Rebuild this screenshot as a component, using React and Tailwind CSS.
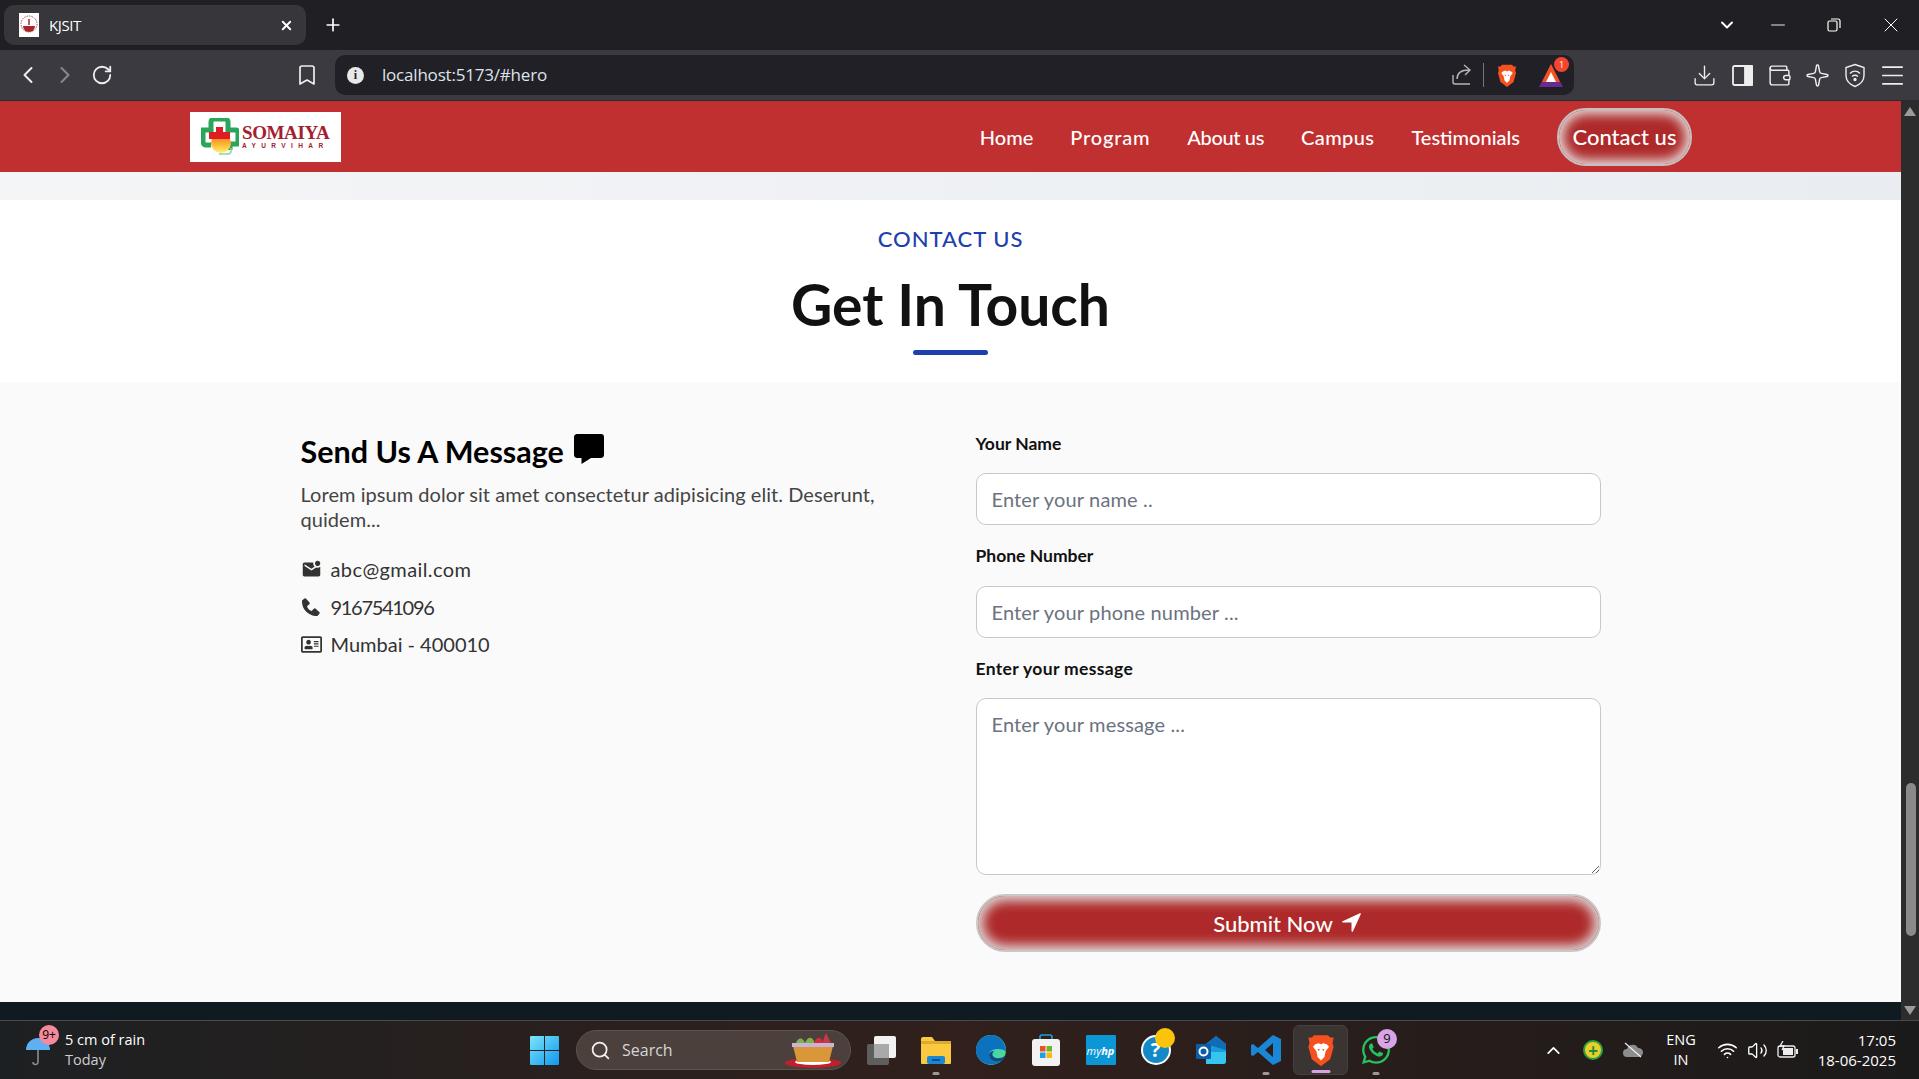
import React from "react";
import { ChevronLeft, ChevronRight, RotateCw, Bookmark, Plus, X, ChevronDown, Minus, Download, Wallet, Menu, Search, ChevronUp, Wifi, Volume2, Sparkle } from "lucide-react";
import { BiSolidMessage, BiSolidPhone } from "react-icons/bi";
import { MdMarkEmailUnread } from "react-icons/md";
import { FaRegAddressCard } from "react-icons/fa";
import { IoNavigate } from "react-icons/io5";
import { FaWhatsapp } from "react-icons/fa";

const font = "font-['Lato','Liberation_Sans',sans-serif]";

function BraveLion({ size = 24 }) {
  return (
    <svg width={size} height={size * 1.15} viewBox="0 0 24 28">
      <path d="M6 1h12l2 2 3 0-1 5 1 3-3 11-8 6-8-6L1 11l1-3-1-5 3 0z" fill="#f4511e" />
      <path d="M7 9l3-1 2 1 2-1 3 1 2 2-3 4-1 5-3 3-3-3-1-5-3-4z" fill="#fff" />
      <path d="M9 13h2l-1 2zM13 13h2l-1 2z" fill="#f4511e" />
    </svg>
  );
}

function Logo() {
  return (
    <div className="w-[151px] h-[50px] bg-white flex items-center pl-[11px] shrink-0">
      <svg width="38" height="38" viewBox="0 0 38 38" className="shrink-0">
        <path d="M10 14V4a3 3 0 0 1 3-3h11a3 3 0 0 1 3 3v8h8a2 2 0 0 1 2 2v12h-8v6" fill="none" stroke="#2aa55a" strokeWidth="5" />
        <path d="M9 12H2v12a3 3 0 0 0 3 3h5" fill="none" stroke="#2aa55a" strokeWidth="5" />
        <path d="M30 30v3a3 3 0 0 1-3 3H18" fill="none" stroke="#8fd3a3" strokeWidth="1.5" />
        <circle cx="20" cy="25" r="10" fill="url(#sun)" />
        <path d="M15 9h7v5h7v7H8v-7h7z" fill="#e01c24" />
        <defs>
          <linearGradient id="sun" x1="0" y1="0" x2="0" y2="1">
            <stop offset="0" stopColor="#f26a21" />
            <stop offset="0.55" stopColor="#fdb52f" />
            <stop offset="1" stopColor="#fff176" />
          </linearGradient>
        </defs>
      </svg>
      <div className="ml-[3px] flex flex-col items-stretch font-['Liberation_Serif',serif] text-[#a3202f] leading-none">
        <span className="text-[19px] font-bold leading-[18px] tracking-[-0.4px] whitespace-nowrap">SOMAIYA</span>
        <span className="text-[6.5px] font-bold leading-[7px] tracking-[5.4px] whitespace-nowrap font-['Liberation_Sans',sans-serif]">AYURVIHAR</span>
      </div>
    </div>
  );
}

function TabStrip() {
  return (
    <div className="h-[50px] bg-[#1f1f24] flex items-center text-white font-['Open_Sans',sans-serif]">
      <div className="ml-[4px] w-[302px] h-[40px] rounded-[10px] bg-[#36363b] flex items-center pl-[15px] pr-[12px]">
        <div className="w-[20px] h-[24px] bg-white flex items-center justify-center shrink-0">
          <svg width="18" height="20" viewBox="0 0 18 20">
            <circle cx="9" cy="9" r="8" fill="none" stroke="#b8474a" strokeWidth="1" strokeDasharray="1.5 1" />
            <path d="M3 11h12a6 6 0 0 1-12 0z" fill="#a8262b" />
            <path d="M9 4v6" stroke="#a8262b" strokeWidth="1.5" />
          </svg>
        </div>
        <span className="ml-[10px] text-[15px] tracking-[-0.4px]">KJSIT</span>
        <X size={15} strokeWidth={3} className="ml-auto" />
      </div>
      <Plus size={20} strokeWidth={2} className="ml-[17px]" />
      <div className="ml-auto flex items-center">
        <ChevronDown size={20} strokeWidth={2.4} />
        <Minus size={22} strokeWidth={1} className="ml-[30px]" />
        <svg width="14" height="14" viewBox="0 0 14 14" fill="none" stroke="#fff" strokeWidth="1.2" className="ml-[38px]">
          <rect x="1" y="3" width="9" height="10" rx="1.5" />
          <path d="M4 1h7a2 2 0 0 1 2 2v7" />
        </svg>
        <X size={24} strokeWidth={1} className="ml-[38px] mr-[16px]" />
      </div>
    </div>
  );
}

function ToolSlot({ children }) {
  return <div className="w-[37.5px] flex items-center justify-center">{children}</div>;
}

function ToolBar() {
  return (
    <div className="h-[51px] bg-[#3a3a40] flex items-center text-[#eeeeee] border-b border-[#2b2b2f]">
      <ChevronLeft size={28} strokeWidth={1.7} className="ml-[14px]" />
      <ChevronRight size={28} strokeWidth={1.7} className="ml-[9px] text-[#8a8a8e]" />
      <RotateCw size={22} strokeWidth={2} className="ml-[12px]" />
      <Bookmark size={24} strokeWidth={1.7} className="ml-[182px]" />
      <div className="ml-[16px] w-[1239px] h-[40px] rounded-[10px] bg-[#202026] flex items-center">
        <div className="ml-[12px] w-[17px] h-[17px] rounded-full bg-[#e8e8e8] flex items-center justify-center text-[#202026] text-[12px] font-bold font-['Liberation_Serif',serif] leading-none">i</div>
        <span className="ml-[18px] text-[17px] tracking-[-0.2px] text-[#dfe3e8] font-['Open_Sans',sans-serif]">localhost:5173/#hero</span>
        <div className="ml-auto w-[24px] flex justify-center">
          <svg width="20" height="22" viewBox="0 0 20 22" fill="none" stroke="#b5b5b8" strokeWidth="1.4">
            <path d="M1 11v7a2 2 0 0 0 2 2h15" />
            <path d="M5 15c0-6 4-9 12-9M12 1l6 5-5 5" />
          </svg>
        </div>
        <div className="ml-[9px] w-[1px] h-[24px] bg-[#77777b]" />
        <div className="ml-[11px] w-[24px] flex justify-center"><BraveLion size={20} /></div>
        <div className="relative ml-[20px] mr-[11px] w-[24px] h-[24px]">
          <svg width="24" height="24" viewBox="0 0 24 24">
            <path d="M12 1L24 24H0z" fill="#662d91" />
            <path d="M12 1L21 19H3z" fill="#f4511e" />
            <path d="M12 9l5 10H7z" fill="#fff" />
          </svg>
          <div className="absolute -top-[6px] -right-[6px] w-[15px] h-[15px] rounded-full bg-[#f4452e] text-white text-[9px] flex items-center justify-center font-['Open_Sans',sans-serif]">1</div>
        </div>
      </div>
      <div className="ml-[112px] flex items-center">
        <ToolSlot><Download size={25} strokeWidth={1.3} /></ToolSlot>
        <ToolSlot>
          <svg width="21" height="21" viewBox="0 0 21 21" fill="none" stroke="#eee" strokeWidth="1.8">
            <rect x="1" y="1" width="19" height="19" rx="1.5" />
            <rect x="13" y="1" width="7" height="19" fill="#eee" />
          </svg>
        </ToolSlot>
        <ToolSlot><Wallet size={25} strokeWidth={1.4} /></ToolSlot>
        <ToolSlot><Sparkle size={25} strokeWidth={1.4} /></ToolSlot>
        <ToolSlot>
          <svg width="20" height="25" viewBox="0 0 20 24" fill="none" stroke="#eee" strokeWidth="1.4">
            <path d="M10 1l9 3v8c0 5-4 9-9 11C5 21 1 17 1 12V4z" />
            <path d="M5 10c3-3 7-3 10 0M7 13c2-1.600 4-1.600 6 0" />
            <circle cx="10" cy="16" r="1" fill="#eee" />
          </svg>
        </ToolSlot>
        <ToolSlot><Menu size={29} strokeWidth={1.4} /></ToolSlot>
      </div>
    </div>
  );
}

function NavBar() {
  const links = [
    ["Home", "tracking-[0px]"],
    ["Program", "tracking-[0.8px]"],
    ["About us", "tracking-[-0.35px]"],
    ["Campus", "tracking-[0.4px]"],
    ["Testimonials", "tracking-[0px]"],
  ];
  return (
    <div className={`h-[71px] bg-[#c13030] flex items-center justify-between pl-[190px] pr-[209px] text-white ${font}`}>
      <Logo />
      <div className="flex items-center gap-[37px]">
        {links.map(([l, t]) => (
          <span key={l} className={`text-[20px] font-medium leading-[30px] whitespace-nowrap ${t}`}>{l}</span>
        ))}
        <div className="w-[135px] h-[58px] rounded-full border-2 border-[#c4c0c0] bg-[#ae2929] shadow-[inset_0_0_12px_4px_rgba(235,235,235,0.95)] flex items-center justify-center text-[22px] font-medium">
          Contact us
        </div>
      </div>
    </div>
  );
}

function Field({ label, placeholder, area, gapClass, track = "" }) {
  const cls = "block w-full border border-[#c8c8c8] rounded-[10px] bg-white pl-[15px] text-[20px] tracking-[0.15px] text-[#333] placeholder:text-[#6b7280] outline-none";
  return (
    <div className="flex flex-col">
      <label className={`text-[17.5px] leading-[24px] font-bold text-[#111] ${track}`}>{label}</label>
      {area ? (
        <textarea placeholder={placeholder} className={`${cls} ${gapClass} h-[177px] pt-[10px]`} />
      ) : (
        <input placeholder={placeholder} className={`${cls} ${gapClass} h-[52px]`} />
      )}
    </div>
  );
}

function Contact() {
  return (
    <div className={`flex-1 flex flex-col ${font}`}>
      <div className="h-[28px] bg-gradient-to-r from-[#f4f5f7] to-[#e9edf1]" />
      <div className="h-[182px] bg-white flex flex-col items-center">
        <div className="mt-[25px] text-[22px] leading-[28px] font-medium text-[#1e40af] tracking-[1px]">CONTACT US</div>
        <h1 className="mt-[19px] text-[57px] leading-[64px] font-bold text-[#111]">Get In Touch</h1>
        <div className="mt-[14px] w-[75px] h-[5px] rounded-full bg-[#1e40af]" />
      </div>
      <div className="flex-1 bg-[#fafafa] pt-[50px]">
        <div className="w-[1300px] mx-auto grid grid-cols-2 gap-[50px]">
          <div className="flex flex-col -mt-[1px]">
            <div className="flex items-center h-[40px]">
              <h2 className="text-[30.5px] leading-[40px] font-bold text-black">Send Us A Message</h2>
              <BiSolidMessage size={36} className="ml-[7px] -mt-[5px] text-black" />
            </div>
            <p className="mt-[11px] text-[20px] tracking-[0.05px] leading-[25px] text-[#444]">Lorem ipsum dolor sit amet consectetur adipisicing elit. Deserunt, quidem...</p>
            <div className="mt-[25px] flex flex-col gap-[12.5px] text-[20px] leading-[25px] text-[#333]">
              <div className="flex items-center gap-[9px]"><MdMarkEmailUnread size={21} /><span className="tracking-[0.4px]">abc@gmail.com</span></div>
              <div className="flex items-center gap-[9px]"><BiSolidPhone size={24} className="-mx-[1.5px]" /><span className="tracking-[-1.3px]">9167541096</span></div>
              <div className="flex items-center gap-[9px]"><FaRegAddressCard size={21} /><span>Mumbai - 400010</span></div>
            </div>
          </div>
          <form className="flex flex-col gap-[19px]">
            <Field label="Your Name" placeholder="Enter your name .." gapClass="mt-[17px]" />
            <Field label="Phone Number" placeholder="Enter your phone number ..." gapClass="mt-[18px]" />
            <Field label="Enter your message" placeholder="Enter your message ..." area gapClass="mt-[17px]" track="tracking-[0.35px]" />
            <div className="h-[58px] rounded-full border-2 border-[#c8c8c8] bg-[#ae2929] shadow-[inset_0_0_12px_5px_rgba(225,225,225,0.95)] flex items-center justify-center text-white text-[22px] font-medium">
              Submit Now
              <IoNavigate size={23} className="ml-[7px] -mt-[1px]" />
            </div>
          </form>
        </div>
      </div>
    </div>
  );
}

function Scrollbar() {
  return (
    <div className="w-[18px] bg-[#2c2c2c] flex flex-col items-center justify-between pt-[6px] pb-[5px] shrink-0 relative">
      <div className="w-0 h-0 border-l-[6px] border-r-[6px] border-b-[9px] border-l-transparent border-r-transparent border-b-[#9b9b9b]" />
      <div className="absolute left-[5px] top-[682px] w-[10px] h-[153px] rounded-full bg-[#8a8a8a]" />
      <div className="w-0 h-0 border-l-[6px] border-r-[6px] border-t-[9px] border-l-transparent border-r-transparent border-t-[#9b9b9b]" />
    </div>
  );
}

function Slot({ children, dot, active, badge }) {
  return (
    <div className={`relative w-[55px] h-[50px] flex items-center justify-center ${active ? "bg-[#3a3432] rounded-[6px] border border-[#453f3d]" : ""}`}>
      {children}
      {dot && <div className="absolute bottom-[0px] left-1/2 -translate-x-1/2 w-[7px] h-[3px] rounded-full bg-[#9a9a9a]" />}
      {active && <div className="absolute bottom-[1px] left-1/2 -translate-x-1/2 w-[19px] h-[3px] rounded-full bg-[#d9a3e3]" />}
      {badge}
    </div>
  );
}

function TaskBar() {
  return (
    <div className="h-[59px] border-t border-[#4a4a4a] bg-gradient-to-r from-[#1d2022] via-[#31201c] to-[#1b1a1a] flex items-center text-white font-['Open_Sans',sans-serif] relative">
      <div className="w-[530px] flex items-center shrink-0">
        <div className="relative ml-[25px] w-[26px] h-[30px] mt-[6px]">
          <svg width="26" height="28" viewBox="0 0 26 28">
            <path d="M1 12a12 12 0 0 1 24 0z" fill="#5fb0f2" />
            <path d="M13 12v12a2.500 2.500 0 0 1-5 0" fill="none" stroke="#8d8d8d" strokeWidth="1.6" />
          </svg>
          <div className="absolute -top-[13px] left-[14px] w-[20px] h-[20px] rounded-full bg-[#f58a9b] text-black text-[12px] flex items-center justify-center leading-none">9+</div>
        </div>
        <div className="ml-[14px] flex flex-col text-[14.5px] leading-[20px]">
          <span>5 cm of rain</span>
          <span className="text-[#cfcfcf]">Today</span>
        </div>
      </div>
      <svg width="29" height="29" viewBox="0 0 29 29" className="shrink-0">
        <defs>
          <linearGradient id="win" x1="0" y1="0" x2="1" y2="1">
            <stop offset="0" stopColor="#7be6f8" />
            <stop offset="1" stopColor="#0f96f0" />
          </linearGradient>
        </defs>
        <path d="M1 0h13v14H0V1a1 1 0 0 1 1-1zM15 0h13a1 1 0 0 1 1 1v13H15zM0 15h14v14H1a1 1 0 0 1-1-1zM15 15h14v13a1 1 0 0 1-1 1H15z" fill="url(#win)" />
      </svg>
      <div className="ml-[17px] w-[275px] h-[40px] rounded-full bg-[#4b403c] border border-[#5c524e] flex items-center relative shrink-0">
        <Search size={21} strokeWidth={2} className="ml-[13px] text-[#f0f0f0]" />
        <span className="ml-[11px] text-[16px] text-[#d5d5d5]">Search</span>
        <svg width="58" height="40" viewBox="0 0 58 40" className="absolute right-[8px] top-[0px]">
          <ellipse cx="29" cy="32" rx="28" ry="5" fill="#c0202c" />
          <ellipse cx="29" cy="31" rx="18" ry="3" fill="#fff" />
          <path d="M9 15h40l-4 16H13z" fill="#d9973a" />
          <rect x="8" y="12" width="42" height="4" fill="#c9b3d9" />
          <path d="M12 12c2-6 7-6 9 0zM21 12c3-7 7-7 10 0z" fill="#7fb24a" />
          <path d="M30 12c3-7 7-7 9 0z" fill="#d62b3c" />
          <path d="M38 12l4-10 5 10z" fill="#c43b45" />
        </svg>
      </div>
      <div className="ml-[2px] flex items-center">
        <Slot>
          <svg width="30" height="30" viewBox="0 0 30 30">
            <rect x="1" y="9" width="22" height="21" rx="2" fill="#5e5e5e" />
            <rect x="8" y="1" width="22" height="22" rx="2" fill="#f2f2f2" />
            <rect x="8" y="9" width="15" height="14" fill="#a9a9a9" />
          </svg>
        </Slot>
        <Slot dot>
          <svg width="30" height="28" viewBox="0 0 30 28">
            <path d="M0 3a2 2 0 0 1 2-2h9l3 4h16v22a1 1 0 0 1-1 1H1a1 1 0 0 1-1-1z" fill="#f9c941" />
            <path d="M0 5h30v3H0z" fill="#e0a92a" />
            <rect x="6" y="20" width="18" height="8" rx="2" fill="#1a87d6" />
            <rect x="11" y="23" width="8" height="2" fill="#0b4f8a" />
          </svg>
        </Slot>
        <Slot>
          <svg width="30" height="30" viewBox="0 0 30 30">
            <defs>
              <linearGradient id="edg" x1="0" y1="0" x2="1" y2="1">
                <stop offset="0" stopColor="#35c1f1" />
                <stop offset="1" stopColor="#52e07c" />
              </linearGradient>
            </defs>
            <circle cx="15" cy="15" r="15" fill="url(#edg)" />
            <path d="M15 0A15 15 0 0 0 6 27c4 3 14 4 20-1-6 2-13 0-13-6 0-4 4-6 9-6 4 0 7 1 8 3C30 7 23 0 15 0z" fill="#0c72bd" />
            <path d="M13 20c0 6 7 8 13 6 2-2 3-4 3-5-5 3-10 3-12 0-1-1-1-3 1-5-3 0-5 2-5 4z" fill="#114a8b" />
          </svg>
        </Slot>
        <Slot>
          <svg width="30" height="32" viewBox="0 0 30 32">
            <path d="M9 6V3a2 2 0 0 1 2-2h8a2 2 0 0 1 2 2v3" fill="none" stroke="#1aa3e0" strokeWidth="1.6" />
            <rect x="1" y="5" width="28" height="27" rx="3" fill="#f2f2f2" />
            <rect x="9" y="12" width="5.500" height="5.500" fill="#e8541f" />
            <rect x="15.500" y="12" width="5.500" height="5.500" fill="#6fb52c" />
            <rect x="9" y="18.500" width="5.500" height="5.500" fill="#1aa3e0" />
            <rect x="15.500" y="18.500" width="5.500" height="5.500" fill="#fbb812" />
          </svg>
        </Slot>
        <Slot>
          <div className="w-[30px] h-[30px] bg-[#0b96d6] flex items-center justify-center text-[11px] italic text-white leading-none rounded-[1px]">my<span className="font-bold">hp</span></div>
        </Slot>
        <Slot
          badge={<div className="absolute top-[3px] left-[27px] w-[20px] h-[20px] rounded-full bg-[#fcc30b]" />}
        >
          <div className="w-[30px] h-[30px] rounded-full bg-[#1489c8] border-2 border-white flex items-center justify-center text-white text-[20px] font-bold leading-none">?</div>
        </Slot>
        <Slot>
          <svg width="30" height="28" viewBox="0 0 30 28">
            <path d="M10 8l10-8 10 8v17a3 3 0 0 1-3 3H10z" fill="#1a9ad6" />
            <path d="M20 0l10 8v6L10 8z" fill="#0f6cb5" />
            <path d="M10 16l20 0v9a3 3 0 0 1-3 3H10z" fill="#35c5ee" />
            <rect x="0" y="8" width="15" height="15" rx="1" fill="#0d5ca8" />
            <circle cx="7.500" cy="15.500" r="4" fill="none" stroke="#fff" strokeWidth="2" />
          </svg>
        </Slot>
        <Slot dot>
          <svg width="30" height="30" viewBox="0 0 30 30">
            <path d="M22 0l8 4v22l-8 4L7 17l-5 4-2-1V10l2-1 5 4zM22 8l-8 7 8 7z" fill="#1a87d6" fillRule="evenodd" />
          </svg>
        </Slot>
        <Slot active>
          <BraveLion size={28} />
        </Slot>
        <Slot
          dot
          badge={<div className="absolute top-[4px] left-[29px] w-[20px] h-[20px] rounded-full bg-[#d7a4e6] text-[#111] text-[13px] flex items-center justify-center">9</div>}
        >
          <FaWhatsapp size={32} className="text-[#25c25f]" />
        </Slot>
      </div>
      <ChevronUp size={21} strokeWidth={2} className="absolute left-[1543px]" />
      <div className="absolute left-[1583px] w-[20px] h-[20px] rounded-full bg-[#e8d02a] border-2 border-[#2f9e44] flex items-center justify-center text-[#1f8a3a] text-[17px] font-bold leading-none">+</div>
      <svg width="22" height="16" viewBox="0 0 22 16" className="absolute left-[1622px]">
        <path d="M5 15a4 4 0 0 1 0-8 6 6 0 0 1 11-1 4.500 4.500 0 0 1 1 9z" fill="#8d8d8d" />
        <path d="M3 1l16 14" stroke="#eee" strokeWidth="1.2" />
      </svg>
      <div className="absolute left-[1661px] w-[40px] flex flex-col items-center text-[14.5px] leading-[20px]">
        <span>ENG</span>
        <span>IN</span>
      </div>
      <Wifi size={21} strokeWidth={1.8} className="absolute left-[1717px]" />
      <Volume2 size={21} strokeWidth={1.5} className="absolute left-[1747px]" />
      <svg width="22" height="18" viewBox="0 0 22 18" fill="none" stroke="#eee" strokeWidth="1.3" className="absolute left-[1777px]">
        <rect x="1" y="5" width="17" height="11" rx="2" />
        <rect x="6" y="7" width="10" height="7" fill="#eee" stroke="none" />
        <rect x="19" y="8" width="2" height="5" fill="#eee" stroke="none" />
        <path d="M6 0L3 5h4l-2 4" />
      </svg>
      <div className="absolute right-[23px] flex flex-col items-end text-[15px] leading-[20px]">
        <span>17:05</span>
        <span>18-06-2025</span>
      </div>
    </div>
  );
}

export default function App() {
  return (
    <div className="w-[1919px] h-[1079px] flex flex-col overflow-hidden">
      <TabStrip />
      <ToolBar />
      <div className="flex-1 flex min-h-0">
        <div className="flex-1 flex flex-col min-w-0">
          <NavBar />
          <Contact />
          <div className="h-[18px] bg-[#0f1a21] shrink-0" />
        </div>
        <Scrollbar />
      </div>
      <TaskBar />
    </div>
  );
}
